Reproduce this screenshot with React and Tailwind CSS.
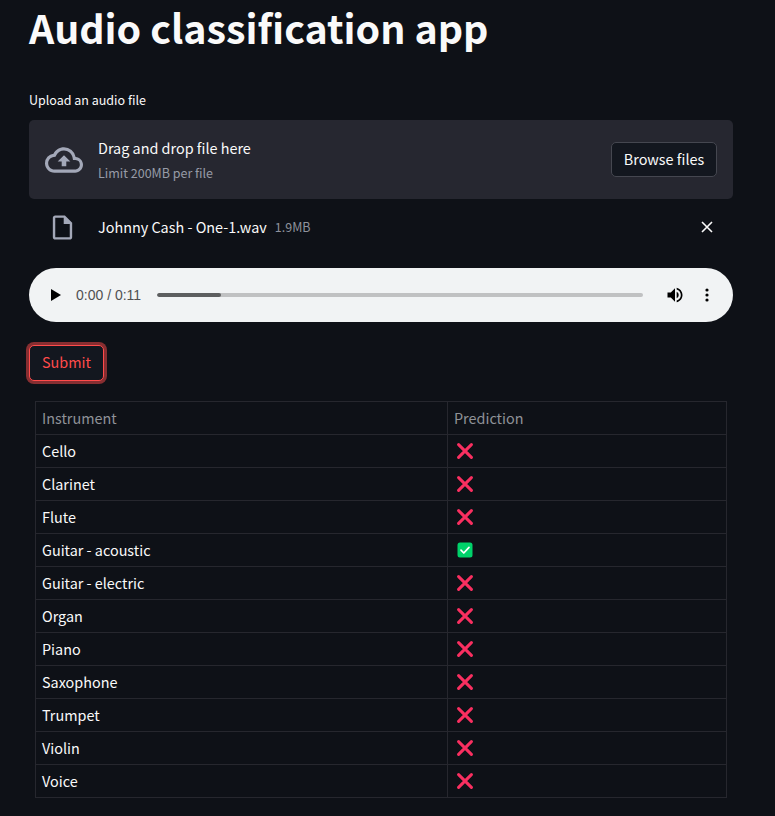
import React from "react";

const rows = ["Cello","Clarinet","Flute","Guitar - acoustic","Guitar - electric","Organ","Piano","Saxophone","Trumpet","Violin","Voice"];

function Cross() {
  return (
    <svg width="16" height="16" viewBox="0 0 16 16" className="block">
      <path d="M1.6 1.6 L14.4 14.4 M14.4 1.6 L1.6 14.4" stroke="#f92f60" strokeWidth="3" strokeLinecap="round" />
    </svg>
  );
}
function Check() {
  return (
    <svg width="16" height="16" viewBox="0 0 16 16" className="block">
      <rect x="0.5" y="0.5" width="15" height="15" rx="2.5" fill="#00d26a" />
      <path d="M4 8.2 L6.8 11 L12 5.4" stroke="#ffffff" strokeWidth="1.7" fill="none" strokeLinecap="round" strokeLinejoin="round" />
    </svg>
  );
}

export default function App() {
  return (
    <div className="min-h-[816px] bg-[#0e1117] text-[#fafafa] font-['Noto_Sans_CJK_SC','Noto_Sans',sans-serif] overflow-hidden">
      <div className="w-[704px] ml-[29px]">
        <h1 className="text-[39.4px] leading-[54px] font-bold h-[58px]">Audio classification app</h1>
        <div className="mt-[32px] text-[12.5px] leading-[20px] h-[20px]">Upload an audio file</div>
        <div className="mt-[10px] h-[79px] rounded-[5px] bg-[#262730] flex items-center pl-4 pr-4">
          <svg width="38" height="38" viewBox="0 0 24 24" fill="#a3a8b8" className="shrink-0">
            <path d="M19.35 10.04A7.49 7.49 0 0 0 12 4C9.11 4 6.6 5.64 5.35 8.04A5.994 5.994 0 0 0 0 14c0 3.31 2.69 6 6 6h13c2.76 0 5-2.24 5-5 0-2.64-2.05-4.78-4.65-4.96zM19 18H6c-2.21 0-4-1.79-4-4 0-2.05 1.53-3.76 3.56-3.97l1.07-.11.5-.95A5.469 5.469 0 0 1 12 6c2.62 0 4.88 1.86 5.39 4.43l.3 1.5 1.53.11A2.98 2.98 0 0 1 22 15c0 1.65-1.35 3-3 3zM8 13h2.55v3h2.9v-3H16l-4-4z" />
          </svg>
          <div className="ml-[15px] flex flex-col flex-1 pt-[2px]">
            <span className="text-[14.4px] leading-[24px]">Drag and drop file here</span>
            <span className="mt-[1px] text-[12.5px] leading-[24px] text-[#a3a8b4] opacity-90">Limit 200MB per file</span>
          </div>
          <button className="h-[35px] w-[106px] pb-[2px] rounded-[5px] border border-[#454750] bg-[#13171f] text-[14.4px] leading-[20px] text-[#fafafa]">Browse files</button>
        </div>
        <div className="mt-[8px] h-[40px] flex items-center">
          <svg width="29" height="29" viewBox="0 0 24 24" fill="#a3a8b8" className="ml-[19px] shrink-0">
            <path d="M14 2H6c-1.1 0-2 .9-2 2v16c0 1.1.9 2 2 2h12c1.1 0 2-.9 2-2V8l-6-6zM6 20V4h7v5h5v11H6z" />
          </svg>
          <span className="ml-[21px] text-[14.4px] leading-[24px]">Johnny Cash - One-1.wav</span>
          <span className="ml-2 text-[12.5px] leading-[24px] text-[#8d919b]">1.9MB</span>
          <svg width="12" height="12" viewBox="0 0 12 12" className="ml-auto mr-[20px] shrink-0">
            <path d="M1 1 L11 11 M11 1 L1 11" stroke="#fafafa" strokeWidth="1.6" />
          </svg>
        </div>
        <div className="mt-[21px] h-[54px] rounded-[27px] bg-[#f1f3f4] flex items-center font-['Liberation_Sans',sans-serif]">
          <svg width="10" height="12" viewBox="0 0 10 12" className="ml-[22px] shrink-0">
            <path d="M0 0 L10 6 L0 12 Z" fill="#000" />
          </svg>
          <span className="ml-[15px] text-[14px] leading-[20px] text-[#4f5052] whitespace-nowrap">0:00 / 0:11</span>
          <div className="ml-[16px] w-[486px] h-1 rounded-sm bg-[#c0c1c2] overflow-hidden">
            <div className="w-[64px] h-1 bg-[#5d5e5f] rounded-sm" />
          </div>
          <svg width="20" height="20" viewBox="0 0 24 24" className="ml-[22px] shrink-0">
            <path d="M3 9v6h4l5 5V4L7 9H3zm13.5 3A4.5 4.5 0 0 0 14 7.97v8.05A4.5 4.5 0 0 0 16.5 12zM14 3.23v2.06c2.89.86 5 3.54 5 6.71s-2.11 5.85-5 6.71v2.06c4.01-.91 7-4.49 7-8.77s-2.99-7.86-7-8.77z" fill="#000" />
          </svg>
          <svg width="4" height="14" viewBox="0 0 4 14" className="ml-[20px] shrink-0">
            <circle cx="2" cy="2" r="1.6" fill="#000" /><circle cx="2" cy="7" r="1.6" fill="#000" /><circle cx="2" cy="12" r="1.6" fill="#000" />
          </svg>
        </div>
        <button className="mt-[23px] block h-[36px] w-[75px] pb-[2px] rounded-[5px] border border-[#ff4b4b] bg-[#13171f] text-[14.4px] leading-[20px] text-[#ff4b4b] shadow-[0_0_0_3px_rgba(255,75,75,0.5)]">Submit</button>
        <table className="mt-[20px] ml-[6px] w-[692px] border-collapse table-fixed text-[14.4px]">
          <colgroup><col className="w-[412px]" /><col /></colgroup>
          <thead>
            <tr className="h-[33px]">
              <th className="border border-[#26272e] px-[6px] py-0 font-normal text-left text-[#8f9297]">Instrument</th>
              <th className="border border-[#26272e] px-[6px] py-0 font-normal text-left text-[#8f9297]">Prediction</th>
            </tr>
          </thead>
          <tbody>
            {rows.map((r) => (
              <tr key={r} className="h-[33px]">
                <td className="border border-[#26272e] px-[6px] py-0">{r}</td>
                <td className="border border-[#26272e] pl-[9px] py-0">{r === "Guitar - acoustic" ? <Check /> : <Cross />}</td>
              </tr>
            ))}
          </tbody>
        </table>
      </div>
    </div>
  );
}
